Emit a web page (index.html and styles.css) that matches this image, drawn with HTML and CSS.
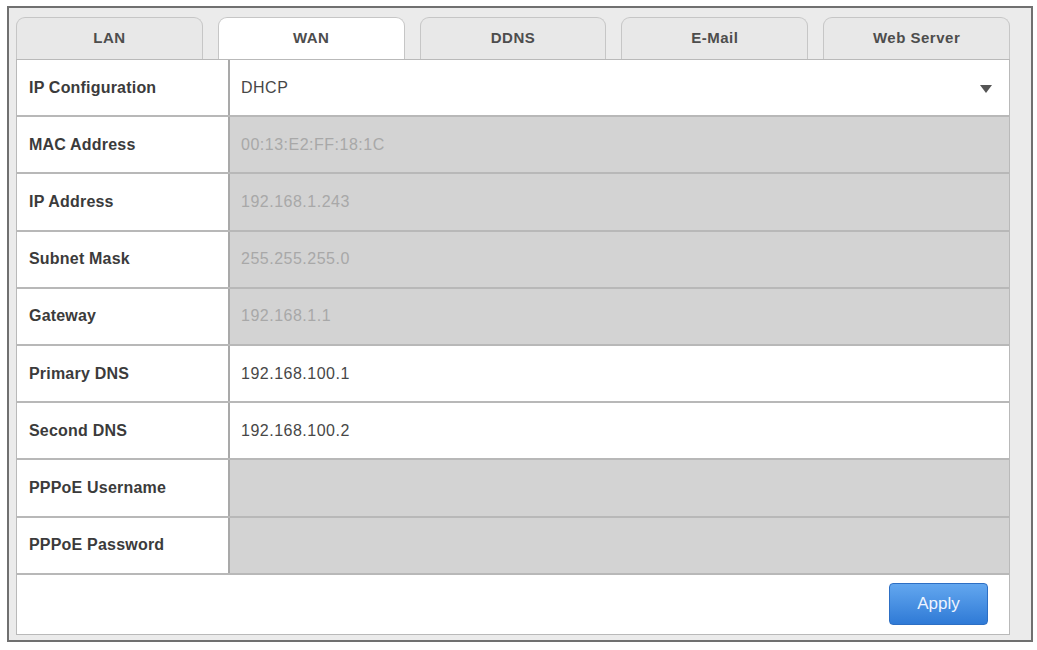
FILE: index.html
```html
<!DOCTYPE html>
<html lang="en">
<head>
  <meta charset="UTF-8">
  <meta name="viewport" content="width=device-width, initial-scale=1.0">
  <title>Network Settings - WAN</title>
  <link rel="stylesheet" href="styles.css">
</head>
<body>
  <div class="frame">
    <div class="panel">

      <!-- tab strip -->
      <div class="tabs">
        <div class="tab">LAN</div>
        <div class="tab active">WAN</div>
        <div class="tab">DDNS</div>
        <div class="tab">E-Mail</div>
        <div class="tab">Web Server</div>
      </div>

      <!-- WAN settings -->
      <div class="form">
        <div class="row">
          <div class="label">IP Configuration</div>
          <div class="value select">
            <span>DHCP</span>
            <svg class="caret" width="12" height="8" viewBox="0 0 12 8"><path d="M0 0h12L6 8z" fill="#555"/></svg>
          </div>
        </div>
        <div class="row">
          <div class="label">MAC Address</div>
          <div class="value disabled">00:13:E2:FF:18:1C</div>
        </div>
        <div class="row">
          <div class="label">IP Address</div>
          <div class="value disabled">192.168.1.243</div>
        </div>
        <div class="row">
          <div class="label">Subnet Mask</div>
          <div class="value disabled">255.255.255.0</div>
        </div>
        <div class="row">
          <div class="label">Gateway</div>
          <div class="value disabled">192.168.1.1</div>
        </div>
        <div class="row">
          <div class="label">Primary DNS</div>
          <div class="value">192.168.100.1</div>
        </div>
        <div class="row">
          <div class="label">Second DNS</div>
          <div class="value">192.168.100.2</div>
        </div>
        <div class="row">
          <div class="label">PPPoE Username</div>
          <div class="value disabled"></div>
        </div>
        <div class="row">
          <div class="label">PPPoE Password</div>
          <div class="value disabled"></div>
        </div>

        <div class="footer">
          <button class="apply">Apply</button>
        </div>
      </div>

    </div>
  </div>
</body>
</html>
```

FILE: styles.css
```css
body { margin: 0; background: #fff; font-family: "Liberation Sans", Arial, sans-serif; }

.frame { margin: 6px 0 0 7px; width: 1026px; height: 636px; border: 2px solid #707070; background: #ebebeb; padding: 9px 21px 5px 7px; box-sizing: border-box; }
.panel { width: 994px; }

.tabs { display: flex; gap: 15px; height: 42px; }
.tab { flex: 1; display: flex; align-items: center; justify-content: center; padding-bottom: 3px; background: #e8e8e8; border: 1px solid #c6c6c6; border-bottom: none; border-radius: 9px 9px 0 0; font-size: 15px; font-weight: bold; letter-spacing: 0.5px; color: #4d4d4d; }
.tab.active { background: #fff; }

.form { background: #fff; border: 1px solid #b9b9b9; }
.row { display: flex; height: 55.2px; border-bottom: 2px solid #b8b8b8; }
.label { width: 199px; flex: none; display: flex; align-items: center; padding-left: 12px; border-right: 2px solid #a9a9a9; font-size: 16px; font-weight: bold; letter-spacing: 0.2px; color: #3b3b3b; }
.value { flex: 1; display: flex; align-items: center; padding-left: 11px; font-size: 16px; letter-spacing: 0.5px; color: #474747; }
.value.disabled { background: #d3d3d3; color: #a8a8a8; }
.select { justify-content: space-between; padding-right: 17px; }
.caret { margin-top: 2px; }

.footer { height: 59px; display: flex; align-items: center; justify-content: flex-end; padding-right: 21px; }
.apply { width: 99px; height: 42px; border: 1px solid #2d6fc4; border-radius: 4px; background: linear-gradient(#63a7ef, #2f7ad6); color: #eef4ff; font-family: inherit; font-size: 17px; cursor: pointer; }
```
